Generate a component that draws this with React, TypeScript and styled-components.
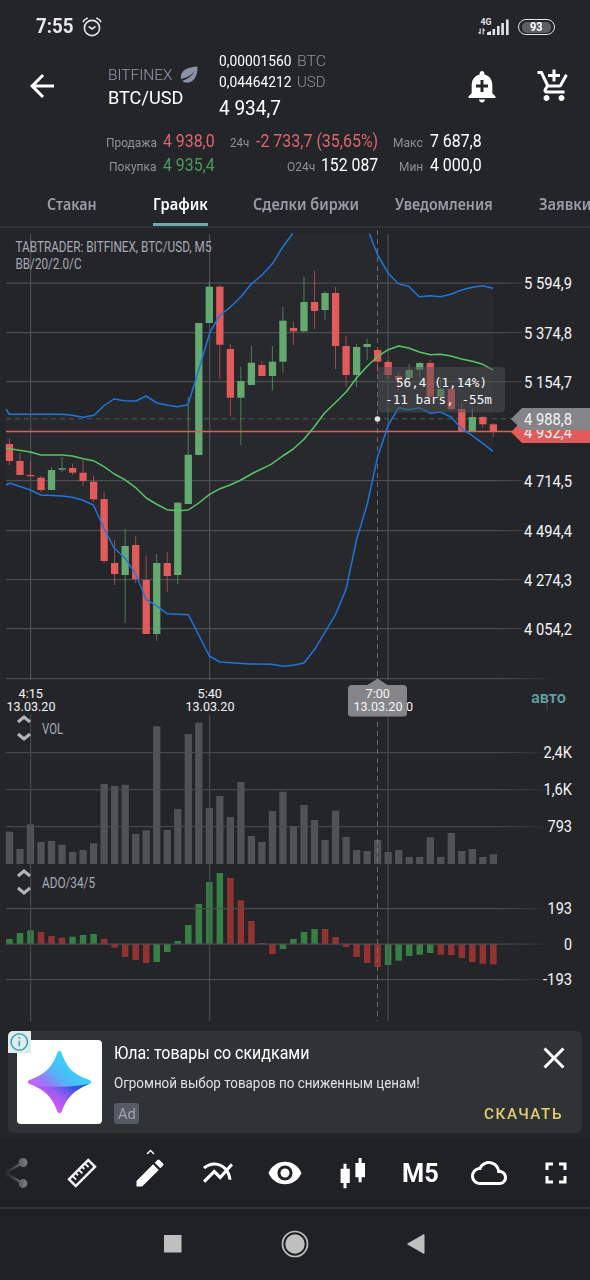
import React, { useLayoutEffect, useRef, useState } from "react";
import styled, { createGlobalStyle } from "styled-components";
import {
  MdAddAlert,
  MdAddShoppingCart,
  MdArrowBack,
  MdClose,
  MdCloudQueue,
  MdEdit,
  MdFullscreen,
  MdMultilineChart,
  MdShare,
  MdVisibility,
} from "react-icons/md";

const ROBOTO = 'Roboto, "Liberation Sans", sans-serif';
const GREEN = "#64a96f";
const RED = "#e15b5a";
const BLUE = "#1b76dd";

const Global = createGlobalStyle`
  body { margin: 0; background: #242529; color: #fff; font-family: ${ROBOTO}; }
  * { box-sizing: border-box; }
  svg { display: block; }
`;

const Screen = styled.div`
  width: 590px;
  height: 1280px;
  overflow: hidden;
  display: flex;
  flex-direction: column;
  background: #242529;
`;

/* ---------- text that is condensed to a given width ---------- */

const FitBox = styled.span<{ $w: number; $size: number; $lh: number; $weight: number; $color: string; $font: string; $ls: number }>`
  display: block;
  flex: none;
  width: ${(p) => p.$w}px;
  font: ${(p) => p.$weight} ${(p) => p.$size}px/${(p) => p.$lh}px ${(p) => p.$font};
  letter-spacing: ${(p) => p.$ls}px;
  color: ${(p) => p.$color};
  white-space: nowrap;
`;
const FitInner = styled.span`
  display: inline-block;
  transform-origin: 0 50%;
`;

type FitProps = { w: number; size: number; lh?: number; weight?: number; color?: string; font?: string; ls?: number; children: string };

function Fit({ w, size, lh = 24, weight = 400, color = "#fff", font = ROBOTO, ls = 0, children }: FitProps) {
  const ref = useRef<HTMLSpanElement>(null);
  const [scale, setScale] = useState(1);
  useLayoutEffect(() => {
    if (ref.current) setScale(w / ref.current.offsetWidth);
  }, [w, children]);
  return (
    <FitBox $w={w} $size={size} $lh={lh} $weight={weight} $color={color} $font={font} $ls={ls}>
      <FitInner ref={ref} style={{ transform: `scaleX(${scale})` }}>
        {children}
      </FitInner>
    </FitBox>
  );
}

/* ---------- status bar and header ---------- */

const StatusBar = styled.div`
  height: 51px;
  padding: 3px 35px 0 35.5px;
  display: flex;
  align-items: center;
  flex: none;
`;
const StatusLeft = styled.div`
  display: flex;
  align-items: center;
  gap: 9px;
  flex: 1;
`;
const StatusRight = styled.div`
  display: flex;
  align-items: center;
  gap: 8px;
`;
const Battery = styled.div`
  width: 37px;
  height: 16px;
  border: 1.5px solid #e4e4e6;
  border-radius: 8px;
  padding: 1.5px 3px;
  display: flex;
`;
const BatteryFill = styled.div`
  flex: 1;
  border-radius: 5px;
  background: #5d5e61;
  display: flex;
  align-items: center;
  justify-content: center;
`;
const TopRow = styled.div`
  height: 78px;
  display: flex;
  flex: none;
`;
const IconButton = styled.div<{ $ml: number }>`
  width: 36px;
  height: 36px;
  margin: 17px 0 0 ${(p) => p.$ml}px;
  flex: none;
  font-size: 36px;
  line-height: 0;
`;
const PairBlock = styled.div`
  width: 111px;
  margin-left: 47.5px;
  padding-top: 12.5px;
`;
const PairLine = styled.div`
  display: flex;
  align-items: center;
  gap: 8px;
`;
const PriceBlock = styled.div`
  width: 120px;
`;
const PriceLine = styled.div`
  display: flex;
  gap: 6px;
`;
const Stats = styled.div`
  height: 48px;
  display: flex;
  flex: none;
`;
const StatColumn = styled.div<{ $w: number }>`
  width: ${(p) => p.$w}px;
  display: flex;
  flex-direction: column;
`;
const StatLine = styled.div`
  display: flex;
  justify-content: flex-end;
  align-items: baseline;
  gap: 6.5px;
  height: 24px;
`;
const Tabs = styled.div`
  height: 51px;
  display: flex;
  flex: none;
  overflow: hidden;
  border-bottom: 2px solid #323337;
`;
const Tab = styled.div<{ $ml: number; $active?: boolean }>`
  margin-left: ${(p) => p.$ml}px;
  height: 50px;
  flex: none;
  padding-top: 15px;
  border-bottom: 4px solid ${(p) => (p.$active ? "#69a9ac" : "transparent")};
`;

const tabs = [
  { name: "Стакан", w: 49.5, ml: 47 },
  { name: "График", w: 55, ml: 56.5, active: true },
  { name: "Сделки биржи", w: 106, ml: 44.5 },
  { name: "Уведомления", w: 98, ml: 36.5 },
  { name: "Заявки", w: 52, ml: 46 },
];

const muted = "#8f9197";

function Stat({ label, lw, value, vw, color }: { label: string; lw: number; value: string; vw: number; color?: string }) {
  return (
    <StatLine>
      <Fit w={lw} size={12.4} color={muted}>{label}</Fit>
      <Fit w={vw} size={18} color={color}>{value}</Fit>
    </StatLine>
  );
}

function AlarmIcon() {
  return (
    <svg width="20" height="20" viewBox="0 0 20 20" fill="none" stroke="#e4e4e6" strokeWidth="1.6" strokeLinecap="round">
      <circle cx="10" cy="11" r="7.6" />
      <path d="M1.2 4.6Q2.6 2 5.2 1.2M18.8 4.6Q17.4 2 14.8 1.2M7.2 9.8l2.8 2.2 3-2.2" />
    </svg>
  );
}

function SignalIcon() {
  return (
    <svg width="32" height="18" viewBox="0 0 32 18" fill="#e4e4e6">
      <text x="2.5" y="6.8" fontFamily="Roboto" fontWeight="700" fontSize="8.5" textLength="11" lengthAdjust="spacingAndGlyphs">4G</text>
      <path d="M9 17v-2.5l4-1.5v4zM14.5 17v-6h2.6v6zM19 17V8h2.6v9zM23.3 17V5h2.6v12zM28 17V1.5h2.6V17z" />
      <path d="M2.2 10.5v5.5M.5 14l1.7 2M5.2 16.5V11l1.6 1.8" stroke="#e4e4e6" strokeWidth="1.1" fill="none" />
    </svg>
  );
}

function LeafIcon() {
  return (
    <svg width="18" height="18" viewBox="0 0 18 18">
      <path d="M17.3.5C10 1 3.500 2.800 1.300 8.200.5 10.300.9 12 1.300 13 5 12.300 11.500 10 14.700 4.800 12.500 10.500 6.500 13.600 2.200 14.700c2.300 2.400 7.300 2.800 10.800-.4C16.800 10.800 17.800 5 17.300.5z" fill="#8a93a6" />
    </svg>
  );
}

/* ---------- chart data, in chart units ---------- */

const barX = (i: number) => 9.4 + 10.52 * i;

// direction, body top, body bottom, high, low
const candles: [0 | 1, number, number, number, number][] = [
  [0, 444, 461, 438, 465], [0, 461, 475, 453, 475], [0, 475, 476.2, 462, 476], [0, 477.7, 490, 476, 492],
  [1, 470, 490, 467, 490], [1, 468.3, 469.7, 457, 472], [0, 468, 472.7, 464, 475], [0, 472.7, 481, 460, 485.7],
  [0, 481.7, 499.3, 475.7, 501.7], [0, 499, 561, 491.7, 563], [0, 563, 574, 540, 585], [1, 546, 575, 529, 623],
  [0, 545, 579, 536, 583], [0, 580, 634, 555.7, 634], [1, 563, 634, 554, 641], [0, 563, 576, 552, 592],
  [1, 502.7, 575, 502, 584], [1, 454.7, 504, 396.7, 504], [1, 323, 455, 323, 455], [1, 286.7, 323, 282, 323],
  [0, 286.7, 344.7, 285, 379], [0, 349, 397.7, 344, 416], [1, 381, 397.7, 366.7, 445], [1, 362.7, 385, 345.7, 385],
  [0, 365, 376, 361, 376], [1, 361.7, 376, 346, 390.7], [1, 320.7, 361.7, 307, 372.7], [0, 328, 331.3, 321.7, 345],
  [1, 302, 331.3, 276.7, 332], [0, 302, 311, 270.7, 329], [1, 293, 310, 291, 319.7], [0, 293, 346, 287, 369],
  [0, 346, 375, 336, 387], [1, 347, 375, 344, 387], [1, 344, 347, 339, 360], [0, 350, 361.7, 348, 372],
  [0, 362, 375, 360, 378], [0, 376, 380, 372.7, 390.7], [1, 370, 378, 364, 379], [1, 363, 369.7, 362, 378],
  [0, 363, 396.7, 360, 398], [1, 389, 396.7, 378, 398], [0, 389, 409, 388, 410], [0, 409, 431.7, 401.7, 432],
  [1, 417, 431.7, 407.7, 432], [0, 417, 424.3, 415.5, 427.7], [0, 424.3, 431.7, 423, 437],
];

const bandUpLeft =
  "6,409 9.4,414.3 62,414.3 72.5,415.3 83,417.3 94,415.3 103.5,406 114,399 125,400.7 136,401 146,396 157,403 167,405 177,406.7 188,404.7 199,369 210,332 220,315 230,307.3 240,297.7 251,284.3 262,275 272.7,263.3 282.7,247 292.7,233.5";
const bandUpRight =
  "369.3,233.5 377.7,255 388.3,273.3 398.7,284 408.7,286.3 419.3,296.7 430.3,295.7 440.3,296.7 451,294.3 461.3,290 472.3,287.3 482.7,285.7 493,288.3";
const bandLow =
  "6,485 10,483.3 30.3,490 40.7,495 62.3,496 72.3,497.3 82.3,500 93.3,505 104,528.3 114.3,548.3 124.7,557.7 135.3,573.3 146.3,599.7 156.3,605.7 167,613.7 188.3,614.7 198.7,635 209.3,656 220,662 250,664 271,664.3 284,666.3 293.3,665.3 304,663 314.7,649.3 325.3,631.7 335.7,614.3 346,589.3 356.7,539.3 367.3,504 377.7,456.7 388.3,425 398.7,407.7 408.7,409.7 419.3,407.7 430.3,413.3 440.3,412 451,417 461.3,428.3 472.3,435.7 482.7,443.3 493,451.3";
const average =
  "6.5,448.3 30.4,452 40.7,455 62,455 72.3,456 83.3,458.7 93.3,460.7 104,466.7 114.3,474 124.7,479.7 135.3,487.3 146.3,498 156.3,504 167,509.7 177.7,510.7 188.3,510 198.7,503 209.3,494.7 220,488.7 230,485 240,480.5 253.3,473 271,464.3 282.7,456 293.3,449 304,439.3 314.3,426.7 324.3,413.3 335.3,402.7 346.3,391.7 356.3,378.3 366.7,366.7 377.3,356.7 388.3,349.7 398.7,346 408.7,348 419.3,352 430.3,354.7 440.3,354.3 451,356 461.3,359 472.3,361.3 482.7,364.3 493,370";
const bandArea = `${bandUpLeft} ${bandUpRight} ${bandLow.split(" ").reverse().join(" ")}`;

const volumeTops = [
  831.7, 849, 824.3, 842, 841, 844.7, 852, 850, 843.3, 784, 786, 784.7, 834, 830.3, 726.3, 830, 809, 734, 722.7, 808, 796,
  817, 782, 836, 842, 811, 791.7, 826, 805, 820, 840, 810.7, 837, 850, 851, 840, 852, 850, 857, 857, 837.3, 857, 833, 851,
  849, 857, 854.3,
];

const oscTips = [
  939, 933, 930.3, 932, 936, 937.7, 936.7, 935, 934, 938.7, 947.7, 957, 960, 963, 962, 952, 941, 925, 904, 882, 873, 878,
  900.3, 921, 943, 954, 949, 939, 932, 929, 929, 937, 947, 957, 963, 967, 965, 960.7, 956, 954.7, 953, 954.7, 955, 958,
  962, 963.7, 964.3,
];
const oscColors = "GGGRRRGGGRRRRRGGGGGGGRRRRRGGGGRRRRRRGGGGGRRRRRR";

const timeLines = [30.5, 209.5, 388];
const priceLabels: [number, string][] = [
  [283, "5 594,9"], [332.5, "5 374,8"], [381.5, "5 154,7"], [480.5, "4 714,5"], [530.5, "4 494,4"], [579.5, "4 274,3"], [628.5, "4 054,2"],
];

type LabelProps = { x: number; y: number; w: number; size?: number; fill?: string; weight?: number; font?: string; children: string };

function Label({ x, y, w, size = 16.5, fill = "#f4f4f6", weight = 400, font = ROBOTO, children }: LabelProps) {
  return (
    <text x={x} y={y} fontFamily={font} fontSize={size} fontWeight={weight} fill={fill} textLength={w} lengthAdjust="spacingAndGlyphs">
      {children}
    </text>
  );
}

function GridFade({ id }: { id: string }) {
  return (
    <linearGradient id={id} gradientUnits="userSpaceOnUse" x1="0" x2="552" y1="0" y2="0">
      <stop offset="0.9" stopColor="#4d4e52" />
      <stop offset="1" stopColor="#4d4e52" stopOpacity="0" />
    </linearGradient>
  );
}

function HLine({ y, fade, to = 552 }: { y: number; fade: string; to?: number }) {
  return <rect x="6" y={y - 0.5} width={to - 6} height="1.2" fill={`url(#${fade})`} />;
}

function VLines({ from, to }: { from: number; to: number }) {
  return <>{timeLines.map((x) => <rect key={x} x={x - 0.5} y={from} width="1.2" height={to - from} fill="#4d4e52" />)}</>;
}

function Chevrons({ y }: { y: number }) {
  return <path d={`M18 ${y + 8}l6-5 6 5M18 ${y + 20}l6 5 6-5`} fill="none" stroke="#b4b5bb" strokeWidth="3" />;
}

const ChartStack = styled.div`
  height: 803px;
  flex: none;
  display: flex;
  flex-direction: column;
`;

function PricePanel() {
  return (
    <svg width="590" height="486" viewBox="0 228 590 486">
      <defs><GridFade id="fadeP" /></defs>
      <polygon points={bandArea} fill="#28292d" />
      {priceLabels.map(([y]) => <HLine key={y} y={y} fade="fadeP" to={522} />)}
      <HLine y={678.5} fade="fadeP" />
      <VLines from={234} to={680} />
      <path d="M547 703v7" stroke="#45464a" />
      <Label x={15.5} y={252} w={196} size={13.8} fill="#a9abb8">TABTRADER: BITFINEX, BTC/USD, M5</Label>
      <Label x={15.5} y={269} w={66} size={13.8} fill="#a9abb8">BB/20/2.0/C</Label>
      <path d="M6 418.8H512" stroke="#55565a" strokeDasharray="5 4" />
      <path d="M377.5 230V684" stroke="#77787c" strokeWidth=".8" strokeDasharray="5 4" />
      {candles.map(([up, top, bottom, high, low], i) => (
        <g key={i} fill={up ? GREEN : RED}>
          <rect x={barX(i) - 0.5} y={high} width="1" height={low - high} opacity=".65" />
          <rect x={barX(i) - 3.6} y={top} width="7.3" height={bottom - top} />
        </g>
      ))}
      <path d="M6 431.6H516" stroke="#dc5f5f" strokeWidth="1.5" />
      <g fill="none" strokeWidth="1.5" strokeLinejoin="round">
        <polyline points={average} stroke="#59c466" />
        <polyline points={bandUpLeft} stroke={BLUE} />
        <polyline points={bandUpRight} stroke={BLUE} />
        <polyline points={bandLow} stroke={BLUE} />
      </g>
      <rect x="378" y="367" width="127" height="45.5" rx="4" fill="#505154" fillOpacity=".5" />
      <Label x={396} y={387} w={91} size={13} font='"DejaVu Sans Mono", monospace'>56,4 (1,14%)</Label>
      <Label x={385} y={403.5} w={107} size={13} font='"DejaVu Sans Mono", monospace'>-11 bars, -55m</Label>
      <circle cx="377.5" cy="419" r="2.8" fill="#e2e2e4" />
      {priceLabels.map(([y, t]) => <Label key={t} x={524} y={y + 6} w={48}>{t}</Label>)}
      <path d="M511 432L522 420.500H590V443H522z" fill={RED} />
      <Label x={524} y={438} w={48}>4 932,4</Label>
      <path d="M511 419L522 408H590V430H522z" fill="#858589" />
      <Label x={524} y={424.7} w={48}>4 988,8</Label>
      <Label x={18.5} y={697.5} w={24.5} size={13.5}>4:15</Label>
      <Label x={6.5} y={711} w={49} size={13.5}>13.03.20</Label>
      <Label x={197.5} y={697.5} w={24.5} size={13.5}>5:40</Label>
      <Label x={185.5} y={711} w={49} size={13.5}>13.03.20</Label>
      <Label x={364} y={711} w={49} size={13.5}>13.03.20</Label>
      <Label x={531} y={703} w={35} size={16} fill="#619da0" weight={600}>авто</Label>
      <path d="M377.5 678.5l10 6.5H403a4 4 0 0 1 4 4V714H348V689a4 4 0 0 1 4-4h15.5z" fill="#858589" />
      <Label x={365.5} y={697.5} w={24.5} size={13.5}>7:00</Label>
      <Label x={353.5} y={711} w={49} size={13.5}>13.03.20</Label>
    </svg>
  );
}

function VolumePanel() {
  return (
    <svg width="590" height="152" viewBox="0 714 590 152">
      <defs><GridFade id="fadeV" /></defs>
      {volumeTops.map((y, i) => <rect key={i} x={barX(i) - 3.6} y={y} width="7.3" height={864 - y} fill="#515256" />)}
      <g opacity=".85">
        {[752.5, 789.5, 826.5].map((y) => <HLine key={y} y={y} fade="fadeV" />)}
        <VLines from={714} to={866} />
      </g>
      <path d="M377.5 722V866" stroke="#77787c" strokeWidth=".8" strokeDasharray="5 4" />
      <path d="M348 714H407a3 3 0 0 1-3 2.5H351a3 3 0 0 1-3-2.5z" fill="#858589" />
      <Chevrons y={714} />
      <Label x={42} y={733.8} w={21} size={14} fill="#a9abb8">VOL</Label>
      <Label x={543.5} y={758} w={28.5}>2,4K</Label>
      <Label x={543.5} y={795} w={28.5}>1,6K</Label>
      <Label x={547.5} y={832.3} w={24.5}>793</Label>
    </svg>
  );
}

function OscillatorPanel() {
  return (
    <svg width="590" height="165" viewBox="0 866 590 165">
      <defs><GridFade id="fadeO" /></defs>
      {oscTips.map((y, i) => (
        <rect key={i} x={barX(i) - 3.2} y={Math.min(y, 944)} width="6.5" height={Math.abs(944 - y)} fill={oscColors[i] === "G" ? "#378043" : "#933331"} />
      ))}
      {[908.5, 944, 979.5].map((y) => <HLine key={y} y={y} fade="fadeO" />)}
      <g opacity=".85"><VLines from={866} to={1021} /></g>
      <path d="M377.5 867V1021" stroke="#77787c" strokeWidth=".8" strokeDasharray="5 4" />
      <Chevrons y={868} />
      <Label x={42} y={888} w={53} size={14} fill="#a9abb8">ADO/34/5</Label>
      <Label x={547.5} y={914} w={24.5}>193</Label>
      <Label x={564} y={949.5} w={8}>0</Label>
      <Label x={543} y={985} w={29}>-193</Label>
    </svg>
  );
}

/* ---------- advertisement ---------- */

const AdCard = styled.div`
  position: relative;
  height: 102px;
  margin: 0 8px;
  flex: none;
  display: flex;
  padding: 9px 9px 0;
  border-radius: 6px;
  background: #303336;
`;
const AdLogo = styled.div`
  width: 85px;
  height: 84px;
  border-radius: 4px;
  background: #fff;
  flex: none;
`;
const InfoBadge = styled.div`
  position: absolute;
  left: 0;
  top: 0;
  width: 23px;
  height: 22px;
  border-radius: 5px 0 0 0;
  background: #e3eaea;
`;
const AdBody = styled.div`
  flex: 1;
  margin-left: 12px;
`;
const AdChip = styled.div`
  display: flex;
  justify-content: center;
  width: 25px;
  height: 21px;
  margin-top: 3px;
  border-radius: 3px;
  background: #555a64;
`;
const AdSide = styled.div`
  display: flex;
  flex-direction: column;
  align-items: flex-end;
  gap: 25px;
  padding-right: 10px;
`;
const CloseSlot = styled.div`
  margin-right: -9px;
  font-size: 36px;
  line-height: 0;
`;

function AdBanner() {
  return (
    <AdCard>
      <AdLogo>
        <svg width="85" height="84" viewBox="17 1040 85 84">
          <defs>
            <linearGradient id="star" x1=".1" y1=".85" x2=".7" y2=".2">
              <stop offset=".1" stopColor="#e255fb" />
              <stop offset=".42" stopColor="#9b78f6" />
              <stop offset=".68" stopColor="#4fb8f8" />
              <stop offset="1" stopColor="#38d3fa" />
            </linearGradient>
            <linearGradient id="fold" x1="0" y1=".7" x2=".9" y2="0">
              <stop offset=".15" stopColor="#df57fa" />
              <stop offset=".5" stopColor="#9a5cf0" />
              <stop offset=".85" stopColor="#2d55de" />
            </linearGradient>
          </defs>
          <path d="M57.5 1052.5q2-3.500 4 0c5 15 11 21.500 28 27.500q3.500 2 0 4c-16 6-23 14-28 27.500q-2 3.500-4 0c-5-14-12-21.500-28-27.500q-3.500-2 0-4c16-6 23-13 28-27.500z" fill="url(#star)" />
          <path d="M33 1085.300Q58 1089 89.500 1084C73.500 1090 66.500 1098 61.500 1111.500q-2 3.500-4 0C52.500 1097.500 46 1090.500 33 1085.300z" fill="url(#fold)" />
        </svg>
      </AdLogo>
      <AdBody>
        <Fit w={195.5} size={18} lh={26}>Юла: товары со скидками</Fit>
        <Fit w={305.5} size={15.5} lh={34} color="#e0e1e2">Огромной выбор товаров по сниженным ценам!</Fit>
        <AdChip><Fit w={18} size={15.5} lh={22} color="#a0a4ae">Ad</Fit></AdChip>
      </AdBody>
      <AdSide>
        <CloseSlot><MdClose /></CloseSlot>
        <Fit w={79.5} size={15.5} lh={26} weight={500} color="#e6cf6d" ls={1.6}>СКАЧАТЬ</Fit>
      </AdSide>
      <InfoBadge>
        <svg width="23" height="22" viewBox="0 0 23 22" fill="none" stroke="#35a9bb">
          <circle cx="11.3" cy="11" r="8.2" strokeWidth="1.6" />
          <path d="M11.3 9.8v5.5M11.3 6v1.8" strokeWidth="1.6" />
        </svg>
      </InfoBadge>
    </AdCard>
  );
}

/* ---------- bottom tool bar and system navigation ---------- */

const ToolBar = styled.div`
  height: 71px;
  margin-top: 5px;
  flex: none;
  display: flex;
  overflow: hidden;
  background: #202124;
  border-bottom: 2px solid #303135;
`;
const Tool = styled.div<{ $first?: boolean }>`
  width: 67.75px;
  margin-left: ${(p) => (p.$first ? "-19.5px" : "0")};
  padding-top: 1px;
  flex: none;
  display: flex;
  align-items: center;
  justify-content: center;
  position: relative;
  font-size: 36px;
  -webkit-mask-image: ${(p) => (p.$first ? "linear-gradient(90deg, transparent 35%, rgba(0,0,0,.45) 72%)" : "none")};
`;
const Caret = styled.svg`
  position: absolute;
  left: 29.5px;
  top: 11px;
`;
const NavBar = styled.div`
  height: 71px;
  flex: none;
  background: #202124;
  display: flex;
  align-items: center;
  padding: 0 165px 1px 164px;
  justify-content: space-between;
`;

function RulerIcon() {
  return (
    <svg width="36" height="36" viewBox="0 0 36 36" fill="none" stroke="#f2f2f3">
      <g transform="rotate(-45 18 18)">
        <rect x="4.4" y="13.2" width="27.2" height="9.6" strokeWidth="2.5" />
        <path d="M9.2 13v5.5M13.6 13v3.8M18 13v5.5M22.4 13v3.8M26.8 13v5.5" strokeWidth="1.9" />
      </g>
    </svg>
  );
}

function CandlesIcon() {
  return (
    <svg width="36" height="36" viewBox="0 0 36 36" fill="#fff">
      <path d="M8.5 8.7h3v5h3.3v14.2h-3.3V33.3h-3v-5.4H5.6V13.7h2.9zM23.6 3h3v5h3.4v14.2h-3.4v5h-3v-5h-3.2V8h3.2z" />
    </svg>
  );
}

export default function App() {
  return (
    <Screen>
      <Global />
      <StatusBar>
        <StatusLeft>
          <Fit w={37.5} size={19.5} weight={700} color="#e8e8ea">7:55</Fit>
          <AlarmIcon />
        </StatusLeft>
        <StatusRight>
          <SignalIcon />
          <Battery><BatteryFill><Fit w={13} size={12.8} lh={12} weight={700}>93</Fit></BatteryFill></Battery>
        </StatusRight>
      </StatusBar>

      <TopRow>
        <IconButton $ml={24}><MdArrowBack /></IconButton>
        <PairBlock>
          <PairLine><Fit w={64.5} size={15.5} lh={22} weight={300} color="#959cb2">BITFINEX</Fit><LeafIcon /></PairLine>
          <Fit w={75.5} size={18} lh={23}>BTC/USD</Fit>
        </PairBlock>
        <PriceBlock>
          <PriceLine>
            <Fit w={72} size={15.5} lh={21}>0,00001560</Fit>
            <Fit w={28.5} size={15.5} lh={21} weight={300} color="#909298">BTC</Fit>
          </PriceLine>
          <PriceLine>
            <Fit w={72} size={15.5} lh={21}>0,04464212</Fit>
            <Fit w={29} size={15.5} lh={21} weight={300} color="#909298">USD</Fit>
          </PriceLine>
          <Fit w={61.5} size={21} lh={30}>4 934,7</Fit>
        </PriceBlock>
        <IconButton $ml={125.5}><MdAddAlert /></IconButton>
        <IconButton $ml={35.5}><MdAddShoppingCart /></IconButton>
      </TopRow>

      <Stats>
        <StatColumn $w={215}>
          <Stat label="Продажа" lw={51} value="4 938,0" vw={52} color="#dd6470" />
          <Stat label="Покупка" lw={47.5} value="4 935,4" vw={52} color="#499a5d" />
        </StatColumn>
        <StatColumn $w={163}>
          <Stat label="24ч" lw={19.5} value="-2 733,7 (35,65%)" vw={122.5} color="#dd6470" />
          <Stat label="О24ч" lw={28} value="152 087" vw={57} />
        </StatColumn>
        <StatColumn $w={103.5}>
          <Stat label="Макс" lw={30} value="7 687,8" vw={52} />
          <Stat label="Мин" lw={24} value="4 000,0" vw={52} />
        </StatColumn>
      </Stats>

      <Tabs>
        {tabs.map((t) => (
          <Tab key={t.name} $ml={t.ml} $active={t.active}>
            <Fit w={t.w} size={15.2} weight={600} color={t.active ? "#fff" : "#9b9da8"} font='"Noto Sans", sans-serif'>{t.name}</Fit>
          </Tab>
        ))}
      </Tabs>

      <ChartStack>
        <PricePanel />
        <VolumePanel />
        <OscillatorPanel />
      </ChartStack>

      <AdBanner />

      <ToolBar>
        <Tool $first><MdShare /></Tool>
        <Tool><RulerIcon /></Tool>
        <Tool>
          <MdEdit />
          <Caret width="9" height="6" viewBox="0 0 9 6" fill="none" stroke="#fff" strokeWidth="1.4"><path d="M1 5l3.5-3.5L8 5" /></Caret>
        </Tool>
        <Tool><MdMultilineChart /></Tool>
        <Tool><MdVisibility /></Tool>
        <Tool><CandlesIcon /></Tool>
        <Tool><Fit w={37} size={26} lh={30} weight={700}>M5</Fit></Tool>
        <Tool><MdCloudQueue /></Tool>
        <Tool><MdFullscreen /></Tool>
      </ToolBar>

      <NavBar>
        <svg width="18" height="18"><rect width="17.5" height="17.5" fill="#bfbfc0" /></svg>
        <svg width="28" height="28" viewBox="0 0 28 28">
          <circle cx="14" cy="14" r="12.5" fill="none" stroke="#bfbfc0" strokeWidth="1.7" />
          <circle cx="14" cy="14" r="9.7" fill="#bfbfc0" />
        </svg>
        <svg width="18" height="20" viewBox="0 0 18 20"><path d="M.5 10.5Q0 10 .5 9.5L16.5.3Q17.5 0 17.5 1V19q0 1-1 .7z" fill="#bfbfc0" /></svg>
      </NavBar>
    </Screen>
  );
}
